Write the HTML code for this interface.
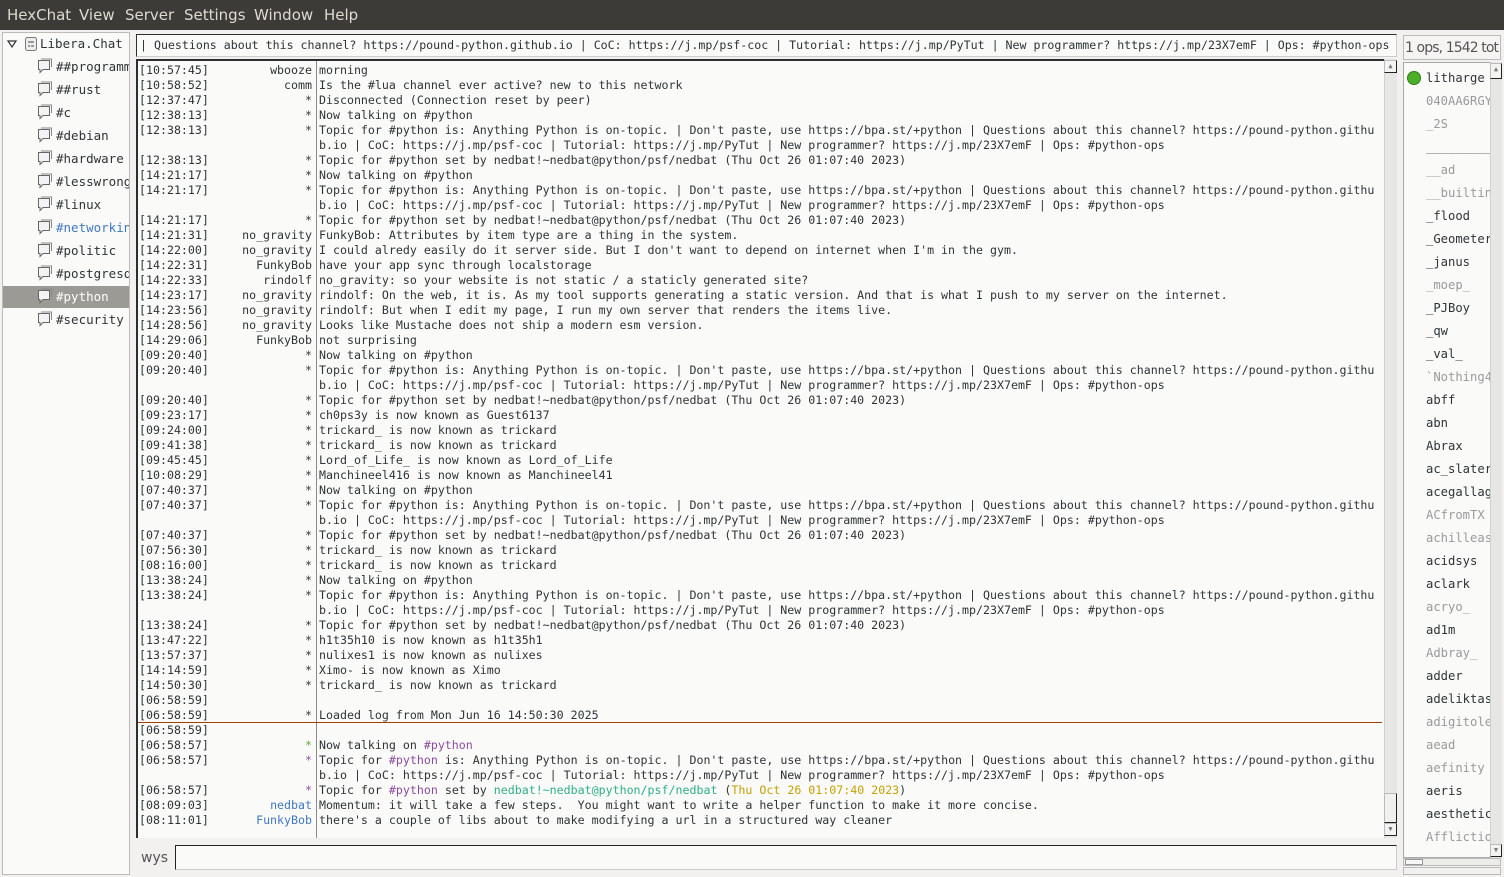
<!DOCTYPE html>
<html><head><meta charset="utf-8"><style>
*{margin:0;padding:0;box-sizing:border-box}
body{width:1504px;height:877px;background:#f2f1f0;position:relative;overflow:hidden;font-family:"DejaVu Sans Mono","Liberation Mono",monospace;color:#2e3436}
.menu{position:absolute;left:0;top:0;width:1504px;height:30px;background:#3c3b37;color:#dfdbd2;font-family:"DejaVu Sans","Liberation Sans",sans-serif;font-size:15px}
.menu span{position:absolute;top:6px}
.side{position:absolute;left:2px;top:32px;width:128px;height:843px;background:#fafaf9;border:1px solid #bdbbb7;overflow:hidden;font-size:12.5px}
.side .it{position:absolute;left:0;width:126px;height:22px;white-space:nowrap}
.side .it span{position:absolute;top:3px}
.side svg{position:absolute}
.topic{position:absolute;left:136px;top:34px;width:1261px;height:23px;background:#fafaf9;border:1px solid #2e2e2e;border-right-color:#ccc;border-bottom-color:#ccc;font-size:11.6px;padding:3px 0 0 3px;white-space:nowrap;overflow:hidden}
.chat{position:absolute;left:136px;top:59px;width:1249px;height:779px;background:#fafaf9;border-left:2px solid #2e2e2e;border-top:2px solid #2e2e2e;overflow:hidden;font-size:11.62px}
.vl{position:absolute;left:178px;top:0;width:1px;height:779px;background:#8a8a8a}
.row{position:absolute;left:0;height:15px;line-height:15px;white-space:pre;width:1249px}
.ts{position:absolute;left:1px}
.nk{position:absolute;right:1075px;text-align:right}
.tx{position:absolute;left:181px}
.p{color:#8c4a9e}.g{color:#2eae88}.y{color:#c4a000}.b{color:#3f78c4}.gs{color:#5aaa30}
.sb{position:absolute;background:#e6e6e4;border-left:1px solid #d0d0d0}
.btn{position:absolute;background:#f3f3f2;border:1px solid #bbb;border-right-color:#222;border-bottom-color:#222;font-size:7px;color:#777;text-align:center;line-height:11px}
.users{position:absolute;left:1403px;top:62px;width:88px;height:796px;background:#fafaf9;border:1px solid #aaa;overflow:hidden;font-size:12.2px}
.u{position:absolute;left:22px;white-space:nowrap}
.aw{color:#9a9a9a}
</style></head><body>
<div class="menu"><span style="left:7px">HexChat</span><span style="left:79px">View</span><span style="left:125px">Server</span><span style="left:184px">Settings</span><span style="left:254px">Window</span><span style="left:324px">Help</span></div>

<div class="side">
<div class="it" style="top:0"><svg style="left:4px;top:7px" width="10" height="8"><path d="M1 1 L9 1 L5 7 Z" fill="none" stroke="#333" stroke-width="1.2"/></svg>
<svg style="left:21px;top:3px" width="14" height="16"><rect x="1.5" y="1.5" width="11" height="13" rx="2" fill="#eee" stroke="#777"/><rect x="4" y="5" width="6" height="2" fill="#999"/><rect x="4" y="9" width="2" height="2" fill="#999"/><rect x="7" y="9" width="3" height="2" fill="#999"/></svg><span style="left:37px">Libera.Chat</span></div>
</div>

<div class="topic">| Questions about this channel? https://pound-python.github.io | CoC: https://j.mp/psf-coc | Tutorial: https://j.mp/PyTut | New programmer? https://j.mp/23X7emF | Ops: #python-ops</div>

<div class="chat" id="chat"><div class="vl"></div>
<div style="position:absolute;left:0;top:661px;width:1244px;height:1px;background:#a04000"></div>
</div>
<div class="sb" style="left:1384px;top:59px;width:13px;height:779px"></div>
<div class="btn" style="left:1384px;top:60px;width:13px;height:13px">▲</div>
<div class="btn" style="left:1384px;top:793px;width:13px;height:30px;background:#f0f0ef"></div>
<div class="btn" style="left:1384px;top:823px;width:13px;height:13px">▼</div>

<div style="position:absolute;left:141px;top:850px;font-family:'DejaVu Sans','Liberation Sans',sans-serif;font-size:14px;color:#555">wys</div>
<div style="position:absolute;left:175px;top:845px;width:1222px;height:25px;background:#fafaf9;border:1px solid #222;border-right-color:#ccc;border-bottom-color:#ccc"></div>

<div style="position:absolute;left:1403px;top:35px;width:98px;height:25px;border:1px solid #bbb;background:#f5f4f3;font-family:'DejaVu Sans','Liberation Sans',sans-serif;font-size:14px;color:#555;white-space:nowrap;overflow:hidden;padding:4px 0 0 1px;letter-spacing:-0.9px">1 ops, 1542 tot</div>
<div class="users" id="users"></div>
<div class="sb" style="left:1490px;top:62px;width:12px;height:796px"></div>
<div class="btn" style="left:1490px;top:63px;width:12px;height:16px">▲</div>
<div class="btn" style="left:1490px;top:844px;width:12px;height:13px">▼</div>
<div style="position:absolute;left:1403px;top:858px;width:98px;height:8px;border:1px solid #bbb;background:#ececeb"></div>
<div style="position:absolute;left:1405px;top:859px;width:18px;height:6px;border:1px solid #999;background:#f6f6f6"></div>
<div style="position:absolute;left:1403px;top:867px;width:98px;height:8px;border:1px solid #bbb"></div>

<script>
var side=document.querySelector('.side');
var ch=["##programming","##rust","#c","#debian","#hardware","#lesswrong","#linux","#networking","#politic","#postgresql","#python","#security"];
var bub='<svg width="17" height="16" style="left:33px;top:2px"><path d="M2.5 2.5 H13.5 V11.5 H7 L4 14.5 V11.5 H2.5 Z" fill="#f3f3f3" stroke="#666"/><path d="M5 1 H15.5 V9" fill="none" stroke="#888"/></svg>';
ch.forEach(function(c,i){var t=23*i+23;var st=c=="#python"?'background:#9c9a94;color:#fff':'';var col=c=="#networking"?'color:#3f78c4':'';
side.innerHTML+='<div class="it" style="top:'+(t)+'px;'+st+'">'+bub+'<span style="left:53px;'+col+'">'+c+'</span></div>';});
var T1="Topic for #python is: Anything Python is on-topic. | Don't paste, use https://bpa.st/+python | Questions about this channel? https://pound-python.githu";
var T2="b.io | CoC: https://j.mp/psf-coc | Tutorial: https://j.mp/PyTut | New programmer? https://j.mp/23X7emF | Ops: #python-ops";
var T3="Topic for #python set by nedbat!~nedbat@python/psf/nedbat (Thu Oct 26 01:07:40 2023)";
var NT="Now talking on #python";
function tb(t){return [[t,"*",NT],[t,"*",T1],["","",T2],[t,"*",T3]];}
var L=[["[10:57:45]","wbooze","morning"],["[10:58:52]","comm","Is the #lua channel ever active? new to this network"],["[12:37:47]","*","Disconnected (Connection reset by peer)"]]
.concat(tb("[12:38:13]"),tb("[14:21:17]"),[
["[14:21:31]","no_gravity","FunkyBob: Attributes by item type are a thing in the system."],
["[14:22:00]","no_gravity","I could alredy easily do it server side. But I don't want to depend on internet when I'm in the gym."],
["[14:22:31]","FunkyBob","have your app sync through localstorage"],
["[14:22:33]","rindolf","no_gravity: so your website is not static / a staticly generated site?"],
["[14:23:17]","no_gravity","rindolf: On the web, it is. As my tool supports generating a static version. And that is what I push to my server on the internet."],
["[14:23:56]","no_gravity","rindolf: But when I edit my page, I run my own server that renders the items live."],
["[14:28:56]","no_gravity","Looks like Mustache does not ship a modern esm version."],
["[14:29:06]","FunkyBob","not surprising"]],tb("[09:20:40]"),[
["[09:23:17]","*","ch0ps3y is now known as Guest6137"],["[09:24:00]","*","trickard_ is now known as trickard"],["[09:41:38]","*","trickard_ is now known as trickard"],["[09:45:45]","*","Lord_of_Life_ is now known as Lord_of_Life"],["[10:08:29]","*","Manchineel416 is now known as Manchineel41"]],
tb("[07:40:37]"),[["[07:56:30]","*","trickard_ is now known as trickard"],["[08:16:00]","*","trickard_ is now known as trickard"]],tb("[13:38:24]"),[
["[13:47:22]","*","h1t35h10 is now known as h1t35h1"],["[13:57:37]","*","nulixes1 is now known as nulixes"],["[14:14:59]","*","Ximo- is now known as Ximo"],["[14:50:30]","*","trickard_ is now known as trickard"],
["[06:58:59]","",""],["[06:58:59]","*","Loaded log from Mon Jun 16 14:50:30 2025"],["[06:58:59]","",""],
["[06:58:57]",'<span class="gs">*</span>','Now talking on <span class="p">#python</span>'],
["[06:58:57]",'<span class="p">*</span>','Topic for <span class="p">#python</span> is: Anything Python is on-topic. | Don\'t paste, use https://bpa.st/+python | Questions about this channel? https://pound-python.githu'],
["","",T2],
["[06:58:57]",'<span class="p">*</span>','Topic for <span class="p">#python</span> set by <span class="g">nedbat!~nedbat@python/psf/nedbat</span> (<span class="y">Thu Oct 26 01:07:40 2023</span>)'],
["[08:09:03]",'<span class="b">nedbat</span>',"Momentum: it will take a few steps.  You might want to write a helper function to make it more concise."],
["[08:11:01]",'<span class="b">FunkyBob</span>',"there's a couple of libs about to make modifying a url in a structured way cleaner"]]);
var c=document.getElementById('chat'),h='';
L.forEach(function(r,i){h+='<div class="row" style="top:'+(2+15*i)+'px"><span class="ts">'+r[0]+'</span><span class="nk">'+r[1]+'</span><span class="tx">'+r[2]+'</span></div>';});
c.innerHTML+=h;
var U=[["litharge",0],["040AA6RGY",1],["_2S",1],["_________",1],["__ad",1],["__builtin",1],["_flood",0],["_Geometer",0],["_janus",0],["_moep_",1],["_PJBoy",0],["_qw",0],["_val_",0],["`Nothing4",1],["abff",0],["abn",0],["Abrax",0],["ac_slater",0],["acegallag",0],["ACfromTX",1],["achilleas",1],["acidsys",0],["aclark",0],["acryo_",1],["ad1m",0],["Adbray_",1],["adder",0],["adeliktas",0],["adigitole",1],["aead",1],["aefinity",1],["aeris",0],["aesthetic",0],["Afflictio",1]];
var u=document.getElementById('users'),s='<div style="position:absolute;left:3px;top:8px;width:14px;height:14px;border-radius:7px;background:#4caf2a;border:1px solid #2e7d16"></div>';
U.forEach(function(x,i){s+='<div class="u'+(x[1]?' aw':'')+'" style="top:'+(8+23*i)+'px;'+(x[0]=="_________"?'color:#666':'')+'">'+x[0]+'</div>';});
u.innerHTML=s;
</script>
</body></html>
